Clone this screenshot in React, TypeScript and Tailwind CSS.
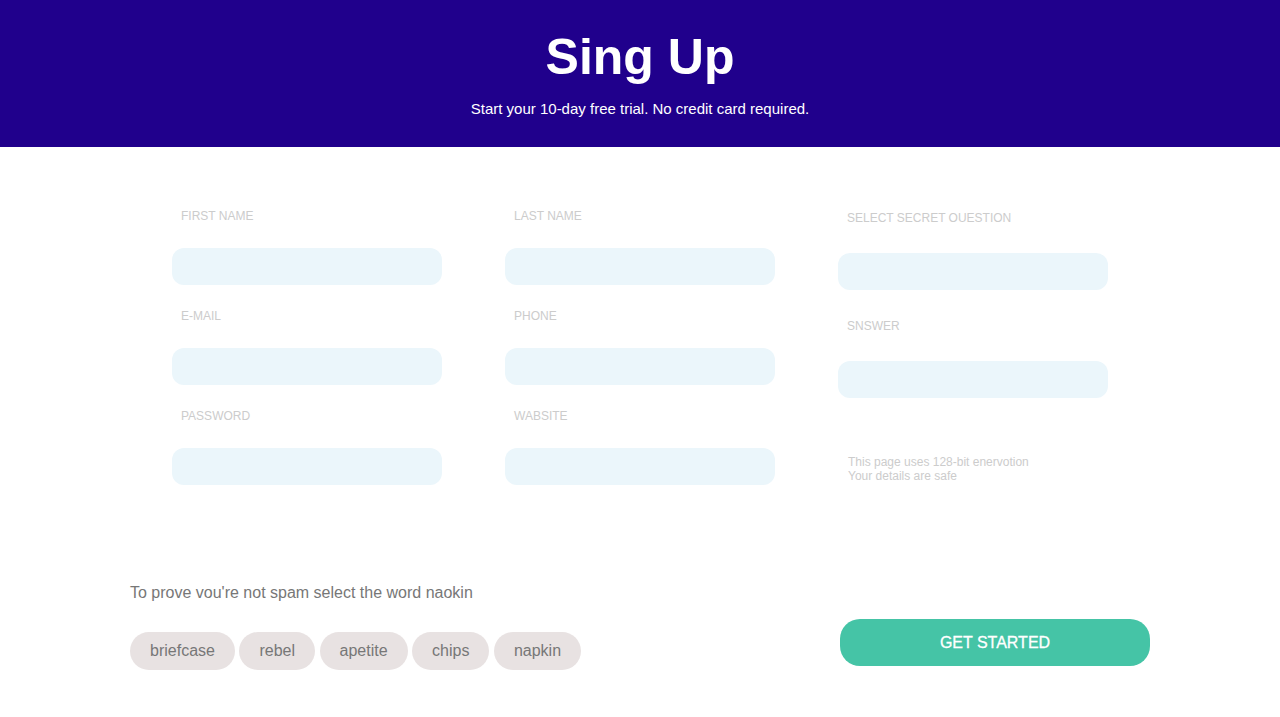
import React from "react";

const font = { fontFamily: '"Liberation Sans", Arial, Helvetica, sans-serif' };

function Field({ label, labelGap, after }: { label: string; labelGap: string; after: string }) {
  return (
    <div className={after}>
      <div className="h-[14px] px-[9px] text-[12px] leading-[14px] text-[#cccccc] uppercase">{label}</div>
      <div className={`${labelGap} h-[37px] w-[270px] rounded-[12px] bg-[#ebf6fb]`} />
    </div>
  );
}

export default function App() {
  const chips = ["briefcase", "rebel", "apetite", "chips", "napkin"];
  return (
    <div style={font} className="min-h-[717px] w-full bg-white">
      <header className="flex h-[147px] flex-col items-center bg-[#20008c] text-white">
        <h1 className="mt-[27px] text-[50px] font-bold leading-[60px]">Sing Up</h1>
        <p className="mt-[13px] text-[15px] leading-[18px]">Start your 10-day free trial. No credit card required.</p>
      </header>

      <div className="mx-auto flex w-[936px] gap-[63px] pt-[62px]">
        <div className="flex flex-col">
          <Field label="First name" labelGap="mt-[25px]" after="" />
          <Field label="E-mail" labelGap="mt-[25px]" after="mt-[24px]" />
          <Field label="Password" labelGap="mt-[25px]" after="mt-[24px]" />
        </div>
        <div className="flex flex-col">
          <Field label="Last name" labelGap="mt-[25px]" after="" />
          <Field label="Phone" labelGap="mt-[25px]" after="mt-[24px]" />
          <Field label="Wabsite" labelGap="mt-[25px]" after="mt-[24px]" />
        </div>
        <div className="flex flex-col pt-[2px]">
          <Field label="Select secret ouestion" labelGap="mt-[28px]" after="" />
          <Field label="Snswer" labelGap="mt-[28px]" after="mt-[29px]" />
          <div className="mt-[57px] px-[10px] text-[12px] leading-[14px] text-[#cccccc]">
            <div>This page uses 128-bit enervotion</div>
            <div>Your details are safe</div>
          </div>
        </div>
      </div>

      <div className="mx-auto mt-[99px] flex w-[1020px] items-end justify-between">
        <div className="flex flex-col">
          <p className="text-[16px] leading-[18px] text-[#777777]">To prove vou're not spam select the word naokin</p>
          <div className="mt-[30px] flex gap-[4.5px]">
            {chips.map((c) => (
              <span
                key={c}
                className="flex h-[38px] items-center rounded-full bg-[#e8e2e2] px-[20px] text-[16px] text-[#777777]"
              >
                {c}
              </span>
            ))}
          </div>
        </div>
        <button className="mb-[4px] h-[47px] w-[310px] rounded-[20px] bg-[#45c4a6] text-[16px] font-medium uppercase text-white [-webkit-text-stroke:0.3px_white]">
          Get started
        </button>
      </div>
    </div>
  );
}
